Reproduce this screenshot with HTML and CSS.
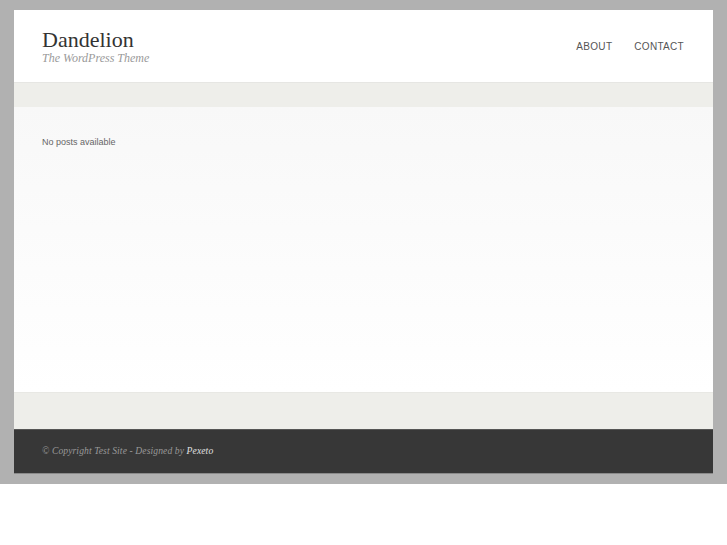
FILE: index.html
```
<!DOCTYPE html>
<html lang="en">
<head>
    <meta charset="UTF-8">
    <title>Test Site | The WordPress Theme</title>
    <link rel="stylesheet" href="styles.css">
</head>
<body>

    <div class="outer">
        <div class="page">

            <div class="header">
                <div class="logo">
                    <h1>Dandelion</h1>
                    <span class="tagline">The WordPress Theme</span>
                </div>
                <ul class="menu">
                    <li><a href="#">About</a></li>
                    <li><a href="#">Contact</a></li>
                </ul>
            </div>

            <div class="band"></div>

            <div class="content">
                <p>No posts available</p>
            </div>

            <div class="band band-bottom"></div>

            <div class="footer">
                <span>&copy; Copyright Test Site - Designed by <a href="#">Pexeto</a></span>
            </div>

        </div>
    </div>

</body>
</html>
```

FILE: styles.css
```
* {
    margin: 0;
    padding: 0;
    box-sizing: border-box;
}

body {
    background: #fff;
    font-family: "Liberation Sans", Arial, sans-serif;
}

.outer {
    background: #b1b1b1;
    padding: 10px 14px;
}

.page {
    background: #fff;
}

.header {
    height: 73px;
    display: flex;
    justify-content: space-between;
    align-items: flex-start;
    padding: 0 29px 0 28px;
    border-bottom: 1px solid #e6e6e3;
}

.logo {
    padding-top: 19px;
}

.logo h1 {
    font-family: "Liberation Serif", Georgia, serif;
    font-weight: normal;
    font-size: 22px;
    line-height: 22px;
    color: #333;
}

.tagline {
    display: block;
    font-family: "Liberation Serif", Georgia, serif;
    font-style: italic;
    font-size: 12px;
    line-height: 14px;
    color: #9a9a9a;
}

.menu {
    list-style: none;
    display: flex;
    gap: 22px;
    padding-top: 26px;
}

.menu a {
    font-size: 10px;
    text-transform: uppercase;
    letter-spacing: 0.3px;
    color: #555;
    text-decoration: none;
}

.band {
    height: 24px;
    background: #eeeeea;
}

.content {
    height: 285px;
    background: linear-gradient(#f8f8f8, #fff);
    padding: 30px 28px;
}

.content p {
    font-size: 9px;
    color: #666;
}

.band-bottom {
    height: 37px;
    border-top: 1px solid #e8e8e4;
}

.footer {
    height: 45px;
    background: #373737;
    border-top: 1px solid #555;
    border-bottom: 1px solid #8a8a8a;
    padding: 10px 28px 0;
}

.footer span {
    font-family: "Liberation Serif", Georgia, serif;
    font-style: italic;
    font-size: 9.6px;
    letter-spacing: 0.1px;
    color: #999;
}

.footer a {
    color: #e0e0e0;
    text-decoration: none;
}
```
